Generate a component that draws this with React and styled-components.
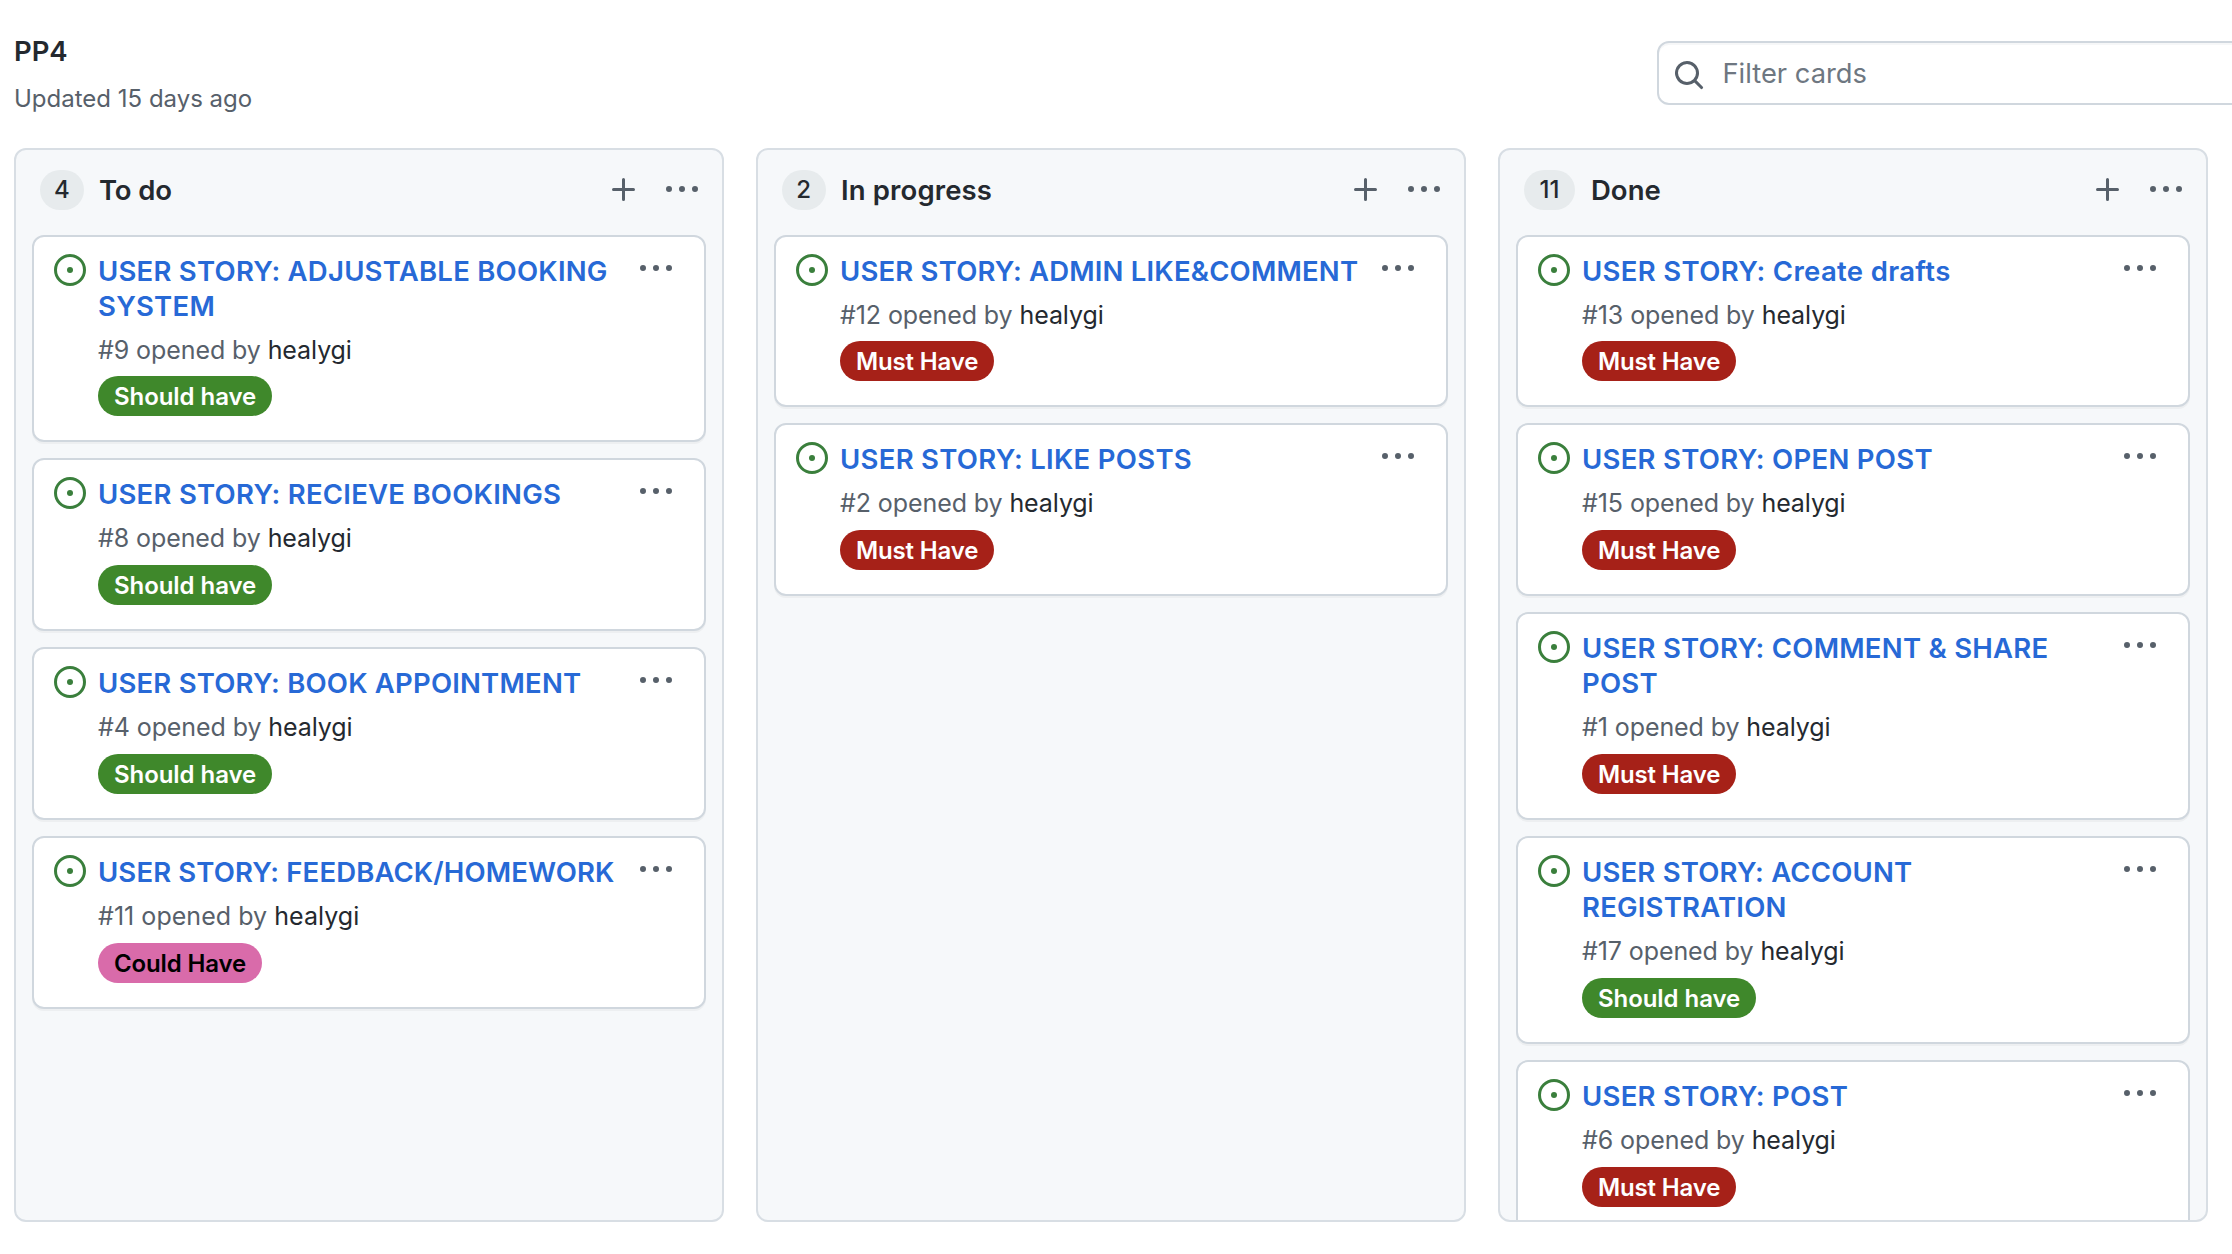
import React from "react";
import styled, { createGlobalStyle } from "styled-components";

const GlobalStyle = createGlobalStyle`
  *, *::before, *::after { box-sizing: border-box; }
  html, body { margin: 0; background: #fff; overflow: hidden; }
  body { font-family: Inter, "Liberation Sans", sans-serif; color: #24292f; }
`;

const Page = styled.div`
  width: 100vw;
  height: 1254px;
  padding: 31px 0 32px 14px;
  display: flex;
  flex-direction: column;
  overflow: hidden;
`;

const ProjectHeader = styled.header`
  flex: none;
  height: 117px;
  display: flex;
  align-items: flex-start;
`;

const ProjectInfo = styled.div`
  flex: 0 0 1643px;
`;

const ProjectTitle = styled.h1`
  margin: 0 0 10px;
  font-size: 27.5px;
  font-weight: 645;
  line-height: 40px;
  letter-spacing: -0.1px;
`;

const Updated = styled.p`
  margin: 0;
  font-size: 24px;
  line-height: 36px;
  color: #57606a;
`;

const SearchBox = styled.label`
  flex: 0 0 760px;
  height: 64px;
  margin-top: 10px;
  padding: 14px 0 0 14px;
  display: flex;
  align-items: flex-start;
  gap: 17.5px;
  border: 2px solid #d0d7de;
  border-radius: 12px;
  box-shadow: inset 0 2px 0 rgba(208, 215, 222, 0.2);
  color: #57606a;

  svg {
    margin-top: 2px;
  }
`;

const Placeholder = styled.span`
  font-size: 27.3px;
  line-height: 34px;
  color: #6e7781;
`;

const Board = styled.main`
  flex: none;
  height: 1074px;
  display: flex;
  gap: 32px;
`;

const Column = styled.section`
  flex: 0 0 710px;
  display: flex;
  flex-direction: column;
  border: 2px solid #d8dee4;
  border-radius: 12px;
  background: #f6f8fa;
  overflow: hidden;
`;

const ColumnHeader = styled.div`
  flex: none;
  padding: 20px 24px 24.6px;
  display: flex;
  align-items: center;
`;

const Counter = styled.span`
  min-width: 43.5px;
  height: 40px;
  padding: 0 ${(p) => (p.$wide ? 15.5 : 13.6)}px;
  margin-right: ${(p) => (p.$wide ? 16 : 15.4)}px;
  border-radius: 20px;
  background: #e7ebed;
  font-size: 24px;
  font-weight: 550;
  line-height: 40px;
  text-align: center;
`;

const ColumnTitle = styled.h2`
  flex: 1;
  margin: 0;
  font-size: 27.5px;
  font-weight: 645;
  line-height: 40px;
  letter-spacing: ${(p) => p.$tracking || 0}px;
`;

const Actions = styled.div`
  display: flex;
  gap: 26px;
  color: #57606a;
`;

const CardList = styled.div`
  padding: 0 16px;
  display: flex;
  flex-direction: column;
  gap: 16px;
`;

const Card = styled.article`
  flex: none;
  padding: 17px 32px 23.9px 20px;
  display: flex;
  align-items: flex-start;
  border: 2px solid #d0d7de;
  border-radius: 12px;
  background: #fff;
  box-shadow: 0 2px 0 rgba(27, 31, 36, 0.04);
`;

const CardBody = styled.div`
  flex: 1;
  min-width: 0;
  padding: 0 8px 0 12px;
`;

const CardTitle = styled.h3`
  margin: 0;
  font-size: 27.5px;
  font-weight: 645;
  line-height: 35px;
  letter-spacing: ${(p) => p.$tracking}px;
  color: #2769d6;
`;

const TitleLine = styled.span`
  display: block;
  white-space: nowrap;
`;

const Meta = styled.p`
  margin: 8px 0 7.9px;
  font-size: 25px;
  line-height: 37px;
  letter-spacing: ${(p) => p.$tracking || -0.09}px;
  color: #57606a;
`;

const Author = styled.span`
  color: #24292f;
`;

const labelColors = {
  "Should have": ["#3f882b", "#fff"],
  "Must Have": ["#a62118", "#fff"],
  "Could Have": ["#d96baa", "#000"],
};

const Label = styled.span`
  display: block;
  width: fit-content;
  height: 40px;
  padding: 0 ${(p) => (p.$kind === "Must Have" ? 15.6 : 16)}px 0 16px;
  border-radius: 20px;
  background: ${(p) => labelColors[p.$kind][0]};
  color: ${(p) => labelColors[p.$kind][1]};
  font-size: 24px;
  font-weight: 555;
  line-height: 41px;
  letter-spacing: ${(p) => (p.$kind === "Should have" ? -0.06 : -0.14)}px;
`;

const Icon = styled.svg`
  flex: none;
  display: block;
  width: 32px;
  height: 32px;
  fill: currentColor;
`;

const OpenIcon = styled(Icon)`
  color: #3a7f3c;
`;

const CardMenu = styled.div`
  flex: none;
  margin-top: -1px;
  color: #57606a;
`;

const Plus = () => (
  <Icon viewBox="0 0 16 16">
    <path d="M7.75 2a.75.75 0 01.75.75V7h4.25a.75.75 0 110 1.5H8.5v4.25a.75.75 0 11-1.5 0V8.5H2.75a.75.75 0 010-1.5H7V2.75A.75.75 0 017.75 2z" />
  </Icon>
);

const Kebab = () => (
  <Icon viewBox="0 0 16 16">
    <path d="M8 9a1.5 1.5 0 100-3 1.5 1.5 0 000 3zM1.5 9a1.5 1.5 0 100-3 1.5 1.5 0 000 3zm13 0a1.5 1.5 0 100-3 1.5 1.5 0 000 3z" />
  </Icon>
);

const SearchIcon = () => (
  <Icon viewBox="0 0 16 16">
    <path
      fillRule="evenodd"
      d="M11.5 7a4.499 4.499 0 11-8.998 0A4.499 4.499 0 0111.5 7zm-.82 4.74a6 6 0 111.06-1.06l3.04 3.04a.75.75 0 11-1.06 1.06l-3.04-3.04z"
    />
  </Icon>
);

const IssueOpened = () => (
  <OpenIcon viewBox="0 0 16 16">
    <path d="M8 9.5a1.5 1.5 0 100-3 1.5 1.5 0 000 3z" />
    <path fillRule="evenodd" d="M8 0a8 8 0 100 16A8 8 0 008 0zM1.5 8a6.5 6.5 0 1113 0 6.5 6.5 0 01-13 0z" />
  </OpenIcon>
);

const columns = [
  {
    name: "To do",
    count: 4,
    tracking: -0.1,
    cards: [
      { lines: ["USER STORY: ADJUSTABLE BOOKING", "SYSTEM"], id: 9, label: "Should have", tracking: 0.24 },
      { lines: ["USER STORY: RECIEVE BOOKINGS"], id: 8, label: "Should have", tracking: 0.25 },
      { lines: ["USER STORY: BOOK APPOINTMENT"], id: 4, label: "Should have", tracking: 0.2 },
      { lines: ["USER STORY: FEEDBACK/HOMEWORK"], id: 11, label: "Could Have", tracking: 0.13, metaTracking: 0.04 },
    ],
  },
  {
    name: "In progress",
    count: 2,
    tracking: 0.15,
    cards: [
      { lines: ["USER STORY: ADMIN LIKE&COMMENT"], id: 12, label: "Must Have", tracking: 0.19 },
      { lines: ["USER STORY: LIKE POSTS"], id: 2, label: "Must Have", tracking: 0.29 },
    ],
  },
  {
    name: "Done",
    count: 11,
    tracking: 0.05,
    cards: [
      { lines: ["USER STORY: Create drafts"], id: 13, label: "Must Have", tracking: 0.34 },
      { lines: ["USER STORY: OPEN POST"], id: 15, label: "Must Have", tracking: 0.28 },
      { lines: ["USER STORY: COMMENT & SHARE", "POST"], id: 1, label: "Must Have", tracking: 0.25 },
      { lines: ["USER STORY: ACCOUNT", "REGISTRATION"], id: 17, label: "Should have", tracking: 0.2 },
      { lines: ["USER STORY: POST"], id: 6, label: "Must Have", tracking: 0.28 },
    ],
  },
];

const IssueCard = ({ card }) => (
  <Card>
    <IssueOpened />
    <CardBody>
      <CardTitle $tracking={card.tracking}>
        {card.lines.map((line) => (
          <TitleLine key={line}>{line}</TitleLine>
        ))}
      </CardTitle>
      <Meta $tracking={card.metaTracking}>
        #{card.id} opened by <Author>healygi</Author>
      </Meta>
      <Label $kind={card.label}>{card.label}</Label>
    </CardBody>
    <CardMenu>
      <Kebab />
    </CardMenu>
  </Card>
);

export default function App() {
  return (
    <Page>
      <GlobalStyle />
      <ProjectHeader>
        <ProjectInfo>
          <ProjectTitle>PP4</ProjectTitle>
          <Updated>Updated 15 days ago</Updated>
        </ProjectInfo>
        <SearchBox>
          <SearchIcon />
          <Placeholder>Filter cards</Placeholder>
        </SearchBox>
      </ProjectHeader>
      <Board>
        {columns.map((column) => (
          <Column key={column.name}>
            <ColumnHeader>
              <Counter $wide={column.count > 9}>{column.count}</Counter>
              <ColumnTitle $tracking={column.tracking}>{column.name}</ColumnTitle>
              <Actions>
                <Plus />
                <Kebab />
              </Actions>
            </ColumnHeader>
            <CardList>
              {column.cards.map((card) => (
                <IssueCard key={card.id} card={card} />
              ))}
            </CardList>
          </Column>
        ))}
      </Board>
    </Page>
  );
}
